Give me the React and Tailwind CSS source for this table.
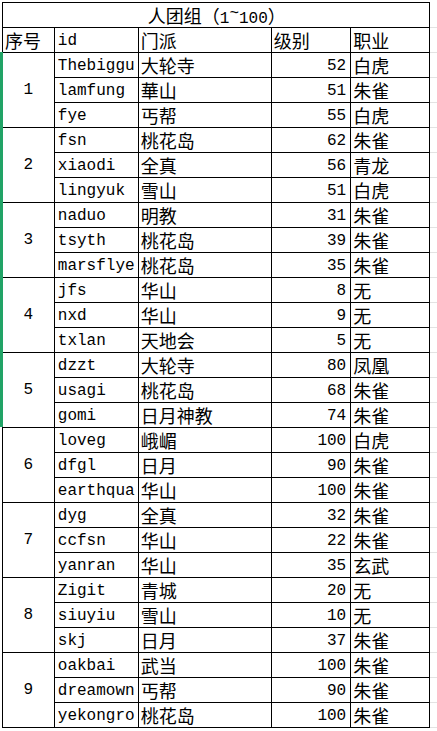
import React from "react";

const groups = [
  [
    ["Thebiggu", "大轮寺", 52, "白虎"],
    ["lamfung", "華山", 51, "朱雀"],
    ["fye", "丐帮", 55, "白虎"],
  ],
  [
    ["fsn", "桃花岛", 62, "朱雀"],
    ["xiaodi", "全真", 56, "青龙"],
    ["lingyuk", "雪山", 51, "白虎"],
  ],
  [
    ["naduo", "明教", 31, "朱雀"],
    ["tsyth", "桃花岛", 39, "朱雀"],
    ["marsflye", "桃花岛", 35, "朱雀"],
  ],
  [
    ["jfs", "华山", 8, "无"],
    ["nxd", "华山", 9, "无"],
    ["txlan", "天地会", 5, "无"],
  ],
  [
    ["dzzt", "大轮寺", 80, "凤凰"],
    ["usagi", "桃花岛", 68, "朱雀"],
    ["gomi", "日月神教", 74, "朱雀"],
  ],
  [
    ["loveg", "峨嵋", 100, "白虎"],
    ["dfgl", "日月", 90, "朱雀"],
    ["earthqua", "华山", 100, "朱雀"],
  ],
  [
    ["dyg", "全真", 32, "朱雀"],
    ["ccfsn", "华山", 22, "朱雀"],
    ["yanran", "华山", 35, "玄武"],
  ],
  [
    ["Zigit", "青城", 20, "无"],
    ["siuyiu", "雪山", 10, "无"],
    ["skj", "日月", 37, "朱雀"],
  ],
  [
    ["oakbai", "武当", 100, "朱雀"],
    ["dreamown", "丐帮", 90, "朱雀"],
    ["yekongro", "桃花岛", 100, "朱雀"],
  ],
];

const td = "border border-black p-0";
const box = "h-[24px] overflow-hidden whitespace-nowrap";
const cjk = "font-['Noto_Sans_CJK_SC',sans-serif] text-[18px] leading-[25px] pl-[2px]";
const mono = "font-['Liberation_Mono','Noto_Sans_CJK_SC',monospace] text-[16px] leading-[26px]";
const ghost = "border-b border-b-[#e3e3e3] p-0";

function Cell({ kind, className = "", children, ...rest }) {
  return (
    <td className={td} {...rest}>
      <div className={`${box} ${kind === "cjk" ? cjk : mono} ${className}`}>{children}</div>
    </td>
  );
}

export default function App() {
  return (
    <div className="relative w-[437px] h-[731px] bg-white pt-[2px] pl-[2px] text-black overflow-hidden">
      <table className="table-fixed border-collapse">
        <colgroup>
          <col className="w-[52px]" />
          <col className="w-[84px]" />
          <col className="w-[134px]" />
          <col className="w-[80px]" />
          <col className="w-[79px]" />
          <col className="w-[8px]" />
        </colgroup>
        <tbody>
          <tr>
            <Cell kind="cjk" colSpan={5} className="text-center">
              人团组（<span className="font-['Liberation_Mono',monospace] text-[16px]">1<span className="relative -top-[5px]">~</span>100</span>）
            </Cell>
            <td className={ghost} />
          </tr>
          <tr>
            <Cell kind="cjk">序号</Cell>
            <Cell kind="mono" className="pl-[3px]">id</Cell>
            <Cell kind="cjk">门派</Cell>
            <Cell kind="cjk">级别</Cell>
            <Cell kind="cjk">职业</Cell>
            <td className={ghost} />
          </tr>
          {groups.map((rows, g) =>
            rows.map((r, i) => (
              <tr key={`${g}-${i}`}>
                {i === 0 && (
                  <td rowSpan={3} className={`${td} ${mono} text-center`}>
                    {g + 1}
                  </td>
                )}
                <Cell kind="mono" className="pl-[3px]">{r[0]}</Cell>
                <Cell kind="cjk">{r[1]}</Cell>
                <Cell kind="mono" className="text-right pr-[4px]">{r[2]}</Cell>
                <Cell kind="cjk">{r[3]}</Cell>
                <td className={ghost} />
              </tr>
            ))
          )}
        </tbody>
      </table>
      <div className="absolute left-0 top-[52px] w-[3px] h-[375px] bg-[#21a366]" />
    </div>
  );
}
